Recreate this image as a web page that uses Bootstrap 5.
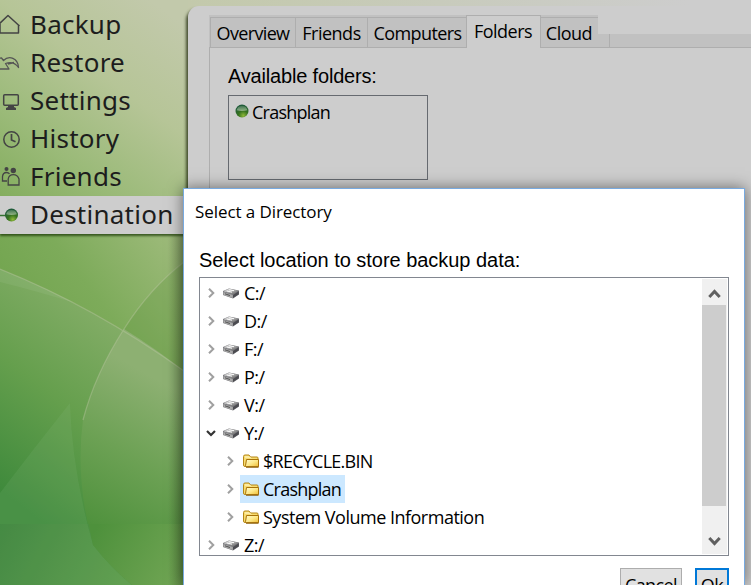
<!DOCTYPE html>
<html lang="en">
<head>
<meta charset="utf-8">
<meta name="viewport" content="width=device-width, initial-scale=1">
<title>Select a Directory</title>
<link href="https://cdn.jsdelivr.net/npm/bootstrap@5.3.0/dist/css/bootstrap.min.css" rel="stylesheet">
<style>
body{width:751px;height:585px;background:#c8cbb4;font-family:"Open Sans","Noto Sans",sans-serif;font-size:18px;line-height:28px;color:#000;letter-spacing:-.5px}
.backdrop-art{inset:0;z-index:0}
.side{width:188px;padding-top:6px;z-index:1}
.side .nav-link{height:38px;padding:0;color:#1d1d1d;font:26px/36px "Noto Sans",sans-serif;letter-spacing:.25px}
.side .nav-link svg{width:30px;height:38px;flex:none}
.side .nav-link.active{background:#cdcdcd;box-shadow:0 2px 2px rgba(30,60,10,.75)}
.main-panel{z-index:2;margin-top:6px;height:579px;padding:9px 0 0 21px;background:#cdcdcd;border-radius:11px 0 0 0;box-shadow:-2px 3px 3px rgba(40,50,20,.8)}
.tab-strip{height:33px;background:#c1c1c1;border-bottom:1px solid #aeaeae;padding-left:1px}
.tab-strip .nav-link{height:30px;margin-top:2px;padding:0;border:1px solid #aeaeae;border-width:1px 0 0 1px;border-radius:0;color:#000;line-height:31px;text-align:center;white-space:nowrap}
.tab-strip .nav-link.active{height:33px;margin-top:0;background:#cdcdcd;border-color:#aeaeae;border-width:1px 1px 0 1px;color:#000;line-height:31px;padding-right:1px}
.tab-strip .w-ov{width:85px;letter-spacing:-.65px}.w-fr{width:72px}.tab-strip .w-co{width:99px;letter-spacing:-.6px;padding-left:1px}.w-fo{width:75px}
.tab-strip .w-cl{width:69px;border-width:1px 1px 0 0;padding-right:12px}
.tab-cover{left:389px;top:0;right:0;height:19px;background:#cdcdcd}
.tab-body{border-left:1px solid #aeaeae;padding:16px 0 0 18px;height:537px}
.arial{font:20px/24px "Liberation Sans",Arial,sans-serif;letter-spacing:-.03px;white-space:nowrap}
.tab-body .arial{letter-spacing:-.18px}
.folder-box{width:200px;height:85px;margin-top:7px;border:1px solid #666a70;padding:2px 0 0 6px;letter-spacing:-.75px}
.folder-box svg{margin:6px 3px 0 0}
.window-box{left:183px;top:188px;width:562px;height:397px;z-index:5;background:#fff;border:1px solid #78aae0;border-bottom:0;box-shadow:0 0 14px rgba(0,0,0,.5);padding:9px 15px 0 15px}
.window-box .caption{margin-left:-4px;font-size:17px;letter-spacing:-.08px}
.window-box .arial{margin-top:22px}
.tree{height:279px;margin-top:5px;border:1px solid #828790;padding:1px}
.tree .node-row{height:28px;padding-left:5px;white-space:nowrap}
.tree .child{padding-left:24px}
.arrow{width:10px;height:12px;margin-right:6px;flex:none}
.drive{width:18px;height:12px;margin-right:4px;flex:none}
.folder{width:18px;height:18px;margin:0 3px 0 2px;flex:none}
.pick{height:28px;padding-right:4px;margin-left:1px}
.snug{letter-spacing:-.75px}
.picked{background:#cce8ff}
.scroll{width:25px;background:#f0f0f0}
.scroll svg{width:25px;height:26px}
.thumb{height:201px;width:24px;background:#cdcdcd}
.btn-row{height:17px;margin-top:12px;overflow:hidden}
.btn-flat{height:32px;padding:0;border:1px solid #adadad;border-radius:0;background:#e1e1e1;font-size:18px;line-height:32px;letter-spacing:-.6px;color:#000}
.b-cancel{width:62px;margin-right:13px}
.b-ok{width:34px;border:2px solid #0078d7;line-height:30px}
</style>
<script src="https://cdn.jsdelivr.net/npm/bootstrap@5.3.0/dist/js/bootstrap.bundle.min.js"></script>
</head>
<body class="position-relative overflow-hidden d-flex align-items-start">
<svg width="0" height="0" class="position-absolute">
<defs>
<linearGradient id="dg" x2="1" y2="1"><stop stop-color="#f4f4f4"/><stop offset=".5" stop-color="#aaa"/><stop offset="1" stop-color="#555"/></linearGradient>
<linearGradient id="fg" x2="1" y2="1"><stop stop-color="#fffbd0"/><stop offset=".5" stop-color="#fde98a"/><stop offset="1" stop-color="#eebb35"/></linearGradient>
<radialGradient id="ball" cx=".6" cy=".85" r=".8"><stop stop-color="#8fb83a"/><stop offset=".45" stop-color="#37731f"/><stop offset="1" stop-color="#1f5a3a"/></radialGradient>
<linearGradient id="shine" x2="0" y2="1"><stop stop-color="#fff" stop-opacity=".15"/><stop offset="1" stop-color="#fff" stop-opacity=".45"/></linearGradient>
<symbol id="i-right" viewBox="0 0 10 12"><path d="M3 1.700 7.300 6 3 10.300" fill="none" stroke="#a0a0a0" stroke-width="2"/></symbol>
<symbol id="i-down" viewBox="0 0 10 12"><path d="M1 4 5 8 9 4" fill="none" stroke="#333" stroke-width="2.200"/></symbol>
<symbol id="i-drive" viewBox="0 0 18 12"><path d="M1 4 7 1.500 17 3.500v4l-6 4L1 8z" fill="#77777b"/><path d="M1.500 4.200 7 1.800 16.500 3.800 11 7.300z" fill="url(#dg)"/><path d="M1.300 5 10.800 8v3L1.500 8z" fill="#aaa"/><path d="M11 8 16.800 4.200v3L11 11z" fill="#4b4b50"/><path d="M5 4l5 1.200M7 2.800l5 .9" stroke="#fff" stroke-width="1"/><path d="M3 6.800l5 1.700" stroke="#555"/></symbol>
<symbol id="i-folder" viewBox="0 0 18 18"><path d="M1.500 13V4.500Q1.500 3 3 3h4l1.500 2h6.500q1 0 1 1v8.500H3q-1.500 0-1.500-1.500z" fill="#f8dc70" stroke="#b58716"/><path d="M4.500 7.500h12v7.200H4.500q-1 0-1-1z" fill="url(#fg)" stroke="#a87208"/><path d="M4 15.200h12.500" stroke="#8a5c08"/><path d="M3 5h4.500l1.500 1.500" stroke="#fffad8" fill="none"/></symbol>
<symbol id="i-ball" viewBox="0 0 14 14"><circle cx="7" cy="7" r="6.500" fill="url(#ball)"/><path d="M1.700 6.300A5.400 5.400 0 0 1 12.300 6.300Q7 7.500 1.700 6.300z" fill="url(#shine)"/></symbol>
</defs>
</svg>

<svg class="backdrop-art position-absolute" width="751" height="585" viewBox="0 0 751 585">
<defs>
<linearGradient id="g1" gradientUnits="userSpaceOnUse" x1="0" y1="205" x2="150" y2="0"><stop stop-color="#82ac5c"/><stop offset=".3" stop-color="#9aba78"/><stop offset=".65" stop-color="#b6c597"/><stop offset="1" stop-color="#c2c9ab"/></linearGradient>
<linearGradient id="g2" gradientUnits="userSpaceOnUse" x1="20" y1="350" x2="184" y2="225"><stop stop-color="#6fa34c"/><stop offset=".45" stop-color="#7dab5a"/><stop offset="1" stop-color="#a3bd80"/></linearGradient>
<linearGradient id="g3" gradientUnits="userSpaceOnUse" x1="0" y1="490" x2="130" y2="320"><stop stop-color="#3f8a3c"/><stop offset=".5" stop-color="#659f4d"/><stop offset="1" stop-color="#86ae69"/></linearGradient>
<linearGradient id="g4" gradientUnits="userSpaceOnUse" x1="95" y1="530" x2="175" y2="390"><stop stop-color="#4e913c"/><stop offset=".5" stop-color="#6ca154"/><stop offset="1" stop-color="#8db072"/></linearGradient>
<linearGradient id="g6" gradientUnits="userSpaceOnUse" x1="188" y1="0" x2="690" y2="0"><stop stop-color="#c3c9ab"/><stop offset="1" stop-color="#cdcdcd"/></linearGradient>
<linearGradient id="g7" x2="1" y2="0"><stop stop-color="#203010" stop-opacity="0"/><stop offset="1" stop-color="#203010" stop-opacity=".3"/></linearGradient>
<linearGradient id="g8" gradientUnits="userSpaceOnUse" x1="0" y1="520" x2="120" y2="585"><stop stop-color="#398239"/><stop offset="1" stop-color="#5a9a49"/></linearGradient>
<linearGradient id="g9" gradientUnits="userSpaceOnUse" x1="95" y1="530" x2="185" y2="580"><stop stop-color="#4e913c"/><stop offset="1" stop-color="#72a655"/></linearGradient>
</defs>
<rect width="188" height="235" fill="url(#g1)"/>
<rect x="188" width="563" height="20" fill="url(#g6)"/>
<rect y="234" width="188" height="351" fill="url(#g2)"/>
<path d="M0 269Q95 307 184 371L188 374V585H0z" fill="url(#g3)"/>
<path d="M0 269Q40 285 75 303Q40 292 0 282z" fill="#fff" opacity=".06"/>
<path d="M124 329Q95 374 83 420Q75 480 93 545Q110 567 132 585H188V374Q155 348 124 329z" fill="url(#g4)"/>
<path d="M124 329Q150 288 184 262L188 259V374Q155 348 124 329z" fill="#568f38" opacity=".22"/>
<path d="M0 524H89L93 545Q110 567 132 585H0z" fill="url(#g8)"/>
<path d="M89 524H188V585H132Q110 567 93 545z" fill="url(#g9)"/>
<path d="M70 403Q72 470 93 545Q110 567 132 585H0V493Q35 447 70 403z" fill="#8fc08a" opacity=".13"/>
<path d="M0 269Q95 307 184 371M83 420Q95 374 124 329Q150 288 184 262" fill="none" stroke="#bfc8a6" stroke-opacity=".4" stroke-width="1.300"/>
<rect x="168" y="235" width="18" height="350" fill="url(#g7)"/>
</svg>

<nav class="side nav flex-column flex-nowrap position-relative flex-shrink-0">
<a class="nav-link d-flex"><svg viewBox="0 0 30 38" fill="none" stroke="#444" stroke-width="1.500" stroke-linejoin="round"><path d="M-3 20 8 9.500 19.500 20M18.500 18.500V27H0V18"/></svg>Backup</a>
<a class="nav-link d-flex"><svg viewBox="0 0 30 38" fill="none" stroke="#555" stroke-width="1.300" stroke-linejoin="round"><path d="M-2 14.500 1.500 14 3.500 16.500C9 11 18 14 18.500 23.500 15 18.500 11 17.500 5.500 19.500L9 25H-2M8 20l6-1.500"/></svg>Restore</a>
<a class="nav-link d-flex"><svg viewBox="0 0 30 38"><rect x="3.700" y="12.700" width="14.600" height="10.600" rx="1" fill="none" stroke="#444" stroke-width="1.500"/><path d="M8 23h6v2l2 1v2H6v-2l2-1z" fill="#444"/></svg>Settings</a>
<a class="nav-link d-flex"><svg viewBox="0 0 30 38" fill="none" stroke="#444" stroke-width="1.500"><circle cx="11.500" cy="19.500" r="7.700"/><path d="M11.500 14v6l4 1.800" stroke-width="1.700"/></svg>History</a>
<a class="nav-link d-flex"><svg viewBox="0 0 30 38" fill="none" stroke="#444" stroke-width="1.300"><circle cx="6.500" cy="11" r="2" fill="#444" stroke="none"/><circle cx="13.300" cy="12.500" r="2.700" fill="#444" stroke="none"/><path d="M7 23H2.500V18.500Q3 14.500 6.500 14.500q2 0 3 1.500M8.200 27V21Q9 16.700 13.300 16.700T19 21v6z"/></svg>Friends</a>
<a class="nav-link active d-flex"><svg viewBox="0 0 30 38"><path d="M0 19.500h6" stroke="#347332" stroke-width="1.500"/><use href="#i-ball" x="4.500" y="12" width="14" height="14"/></svg>Destination</a>
</nav>

<main class="main-panel flex-grow-1 position-relative">
<div class="position-relative">
<ul class="nav tab-strip flex-nowrap list-unstyled mb-0">
<li><a class="nav-link w-ov">Overview</a></li><li><a class="nav-link w-fr">Friends</a></li><li><a class="nav-link w-co">Computers</a></li><li><a class="nav-link active w-fo">Folders</a></li><li><a class="nav-link w-cl">Cloud</a></li>
</ul>
<div class="tab-cover position-absolute"></div>
</div>
<section class="tab-body">
<div class="arial">Available folders:</div>
<div class="folder-box d-flex align-items-start"><svg width="14" height="14"><use href="#i-ball"/></svg>Crashplan</div>
</section>
</main>

<div class="window-box position-absolute">
<div class="caption">Select a Directory</div>
<div class="arial">Select location to store backup data:</div>
<div class="tree d-flex overflow-hidden">
<div class="flex-grow-1">
<div class="node-row d-flex align-items-center"><svg class="arrow"><use href="#i-right"/></svg><svg class="drive"><use href="#i-drive"/></svg>C:/</div>
<div class="node-row d-flex align-items-center"><svg class="arrow"><use href="#i-right"/></svg><svg class="drive"><use href="#i-drive"/></svg>D:/</div>
<div class="node-row d-flex align-items-center"><svg class="arrow"><use href="#i-right"/></svg><svg class="drive"><use href="#i-drive"/></svg>F:/</div>
<div class="node-row d-flex align-items-center"><svg class="arrow"><use href="#i-right"/></svg><svg class="drive"><use href="#i-drive"/></svg>P:/</div>
<div class="node-row d-flex align-items-center"><svg class="arrow"><use href="#i-right"/></svg><svg class="drive"><use href="#i-drive"/></svg>V:/</div>
<div class="node-row d-flex align-items-center"><svg class="arrow"><use href="#i-down"/></svg><svg class="drive"><use href="#i-drive"/></svg>Y:/</div>
<div class="node-row child d-flex align-items-center"><svg class="arrow me-1"><use href="#i-right"/></svg><span class="pick snug d-flex align-items-center"><svg class="folder"><use href="#i-folder"/></svg>$RECYCLE.BIN</span></div>
<div class="node-row child d-flex align-items-center"><svg class="arrow me-1"><use href="#i-right"/></svg><span class="pick picked snug d-flex align-items-center"><svg class="folder"><use href="#i-folder"/></svg>Crashplan</span></div>
<div class="node-row child d-flex align-items-center"><svg class="arrow me-1"><use href="#i-right"/></svg><span class="pick d-flex align-items-center"><svg class="folder"><use href="#i-folder"/></svg>System Volume Information</span></div>
<div class="node-row d-flex align-items-center"><svg class="arrow"><use href="#i-right"/></svg><svg class="drive"><use href="#i-drive"/></svg>Z:/</div>
</div>
<div class="scroll d-flex flex-column flex-shrink-0">
<svg viewBox="0 0 25 26"><path d="M7.300 18 12.500 12.500 17.700 18" fill="none" stroke="#606060" stroke-width="3"/></svg>
<div class="thumb"></div>
<svg class="mt-auto" viewBox="0 0 25 26"><path d="M7.300 10 12.500 15.500 17.700 10" fill="none" stroke="#606060" stroke-width="3"/></svg>
</div>
</div>
<div class="btn-row d-flex align-items-start justify-content-end"><button class="btn btn-flat b-cancel">Cancel</button><button class="btn btn-flat b-ok">Ok</button></div>
</div>
</body>
</html>
